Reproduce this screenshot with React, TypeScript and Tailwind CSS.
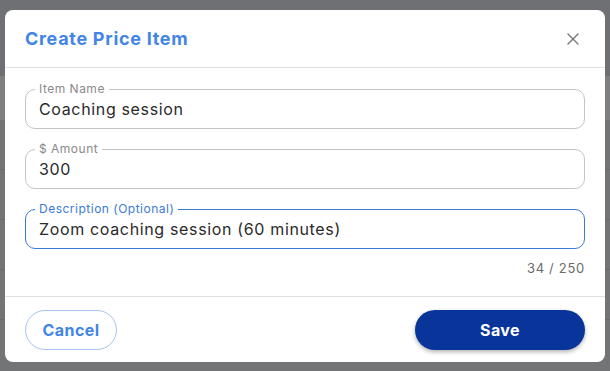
import { X } from 'lucide-react'

const font = { fontFamily: 'Inter, "Noto Sans", sans-serif' }

function Field({
  label,
  value,
  focused = false,
}: {
  label: string
  value: string
  focused?: boolean
}) {
  return (
    <div
      className={`relative h-[40px] rounded-[10px] border px-[13px] flex items-center ${
        focused ? 'border-[#3b7bd6]' : 'border-[#c4c4c4]'
      }`}
    >
      <span
        className={`absolute -top-[8px] left-[9px] bg-white px-[4px] text-[12px] leading-[14px] tracking-[0.5px] ${
          focused ? 'text-[#3b7bd6]' : 'text-[#8a8a8a]'
        }`}
      >
        {label}
      </span>
      <span className="-mt-[1px] text-[16px] tracking-[0.65px] text-[#2a2a2a]">{value}</span>
    </div>
  )
}

export default function App() {
  return (
    <div className="relative h-[371px] w-[610px] overflow-hidden bg-[#737476]" style={font}>
      {/* dimmed page behind the dialog */}
      <div className="flex flex-col">
        <div className="h-[76px] bg-[#6f7073]" />
        <div className="h-[44px] bg-[#7e7f80]" />
        <div className="h-[50px] border-b border-[#6a6a6a]" />
        <div className="h-[50px] border-b border-[#6a6a6a]" />
        <div className="h-[50px] border-b border-[#6a6a6a]" />
        <div className="h-[50px] border-b border-[#6a6a6a]" />
      </div>

      <div className="absolute left-[5px] top-[10px] w-[600px] h-[352px] rounded-[8px] bg-white flex flex-col">
        <div className="h-[58px] flex items-center justify-between pl-[20px] pr-[22px] border-b border-[#e0e0e0]">
          <h2 className="text-[18px] font-bold text-[#4285e6] tracking-[0.7px]">Create Price Item</h2>
          <X size={20} strokeWidth={1.6} className="text-[#7a7a7a]" />
        </div>

        <div className="flex flex-col gap-[20px] px-[20px] pt-[21px]">
          <Field label="Item Name" value="Coaching session" />
          <Field label="$ Amount" value="300" />
          <Field label="Description (Optional)" value="Zoom coaching session (60 minutes)" focused />
        </div>
        <div className="px-[20px] pt-[10px] text-right text-[13px] tracking-[0.7px] text-[#6b6b6b]">34 / 250</div>

        <div className="mt-auto h-[66px] border-t border-[#e0e0e0] flex items-center justify-between px-[20px]">
          <button className="h-[40px] w-[92px] rounded-full border border-[#a8c3ee] text-[16px] font-bold tracking-[0.4px] text-[#4285e6]">
            Cancel
          </button>
          <button className="h-[40px] w-[170px] rounded-full bg-[#09349a] text-[16px] font-bold tracking-[0.4px] text-white shadow-[0_2px_4px_rgba(0,0,0,0.3)]">
            Save
          </button>
        </div>
      </div>
    </div>
  )
}
